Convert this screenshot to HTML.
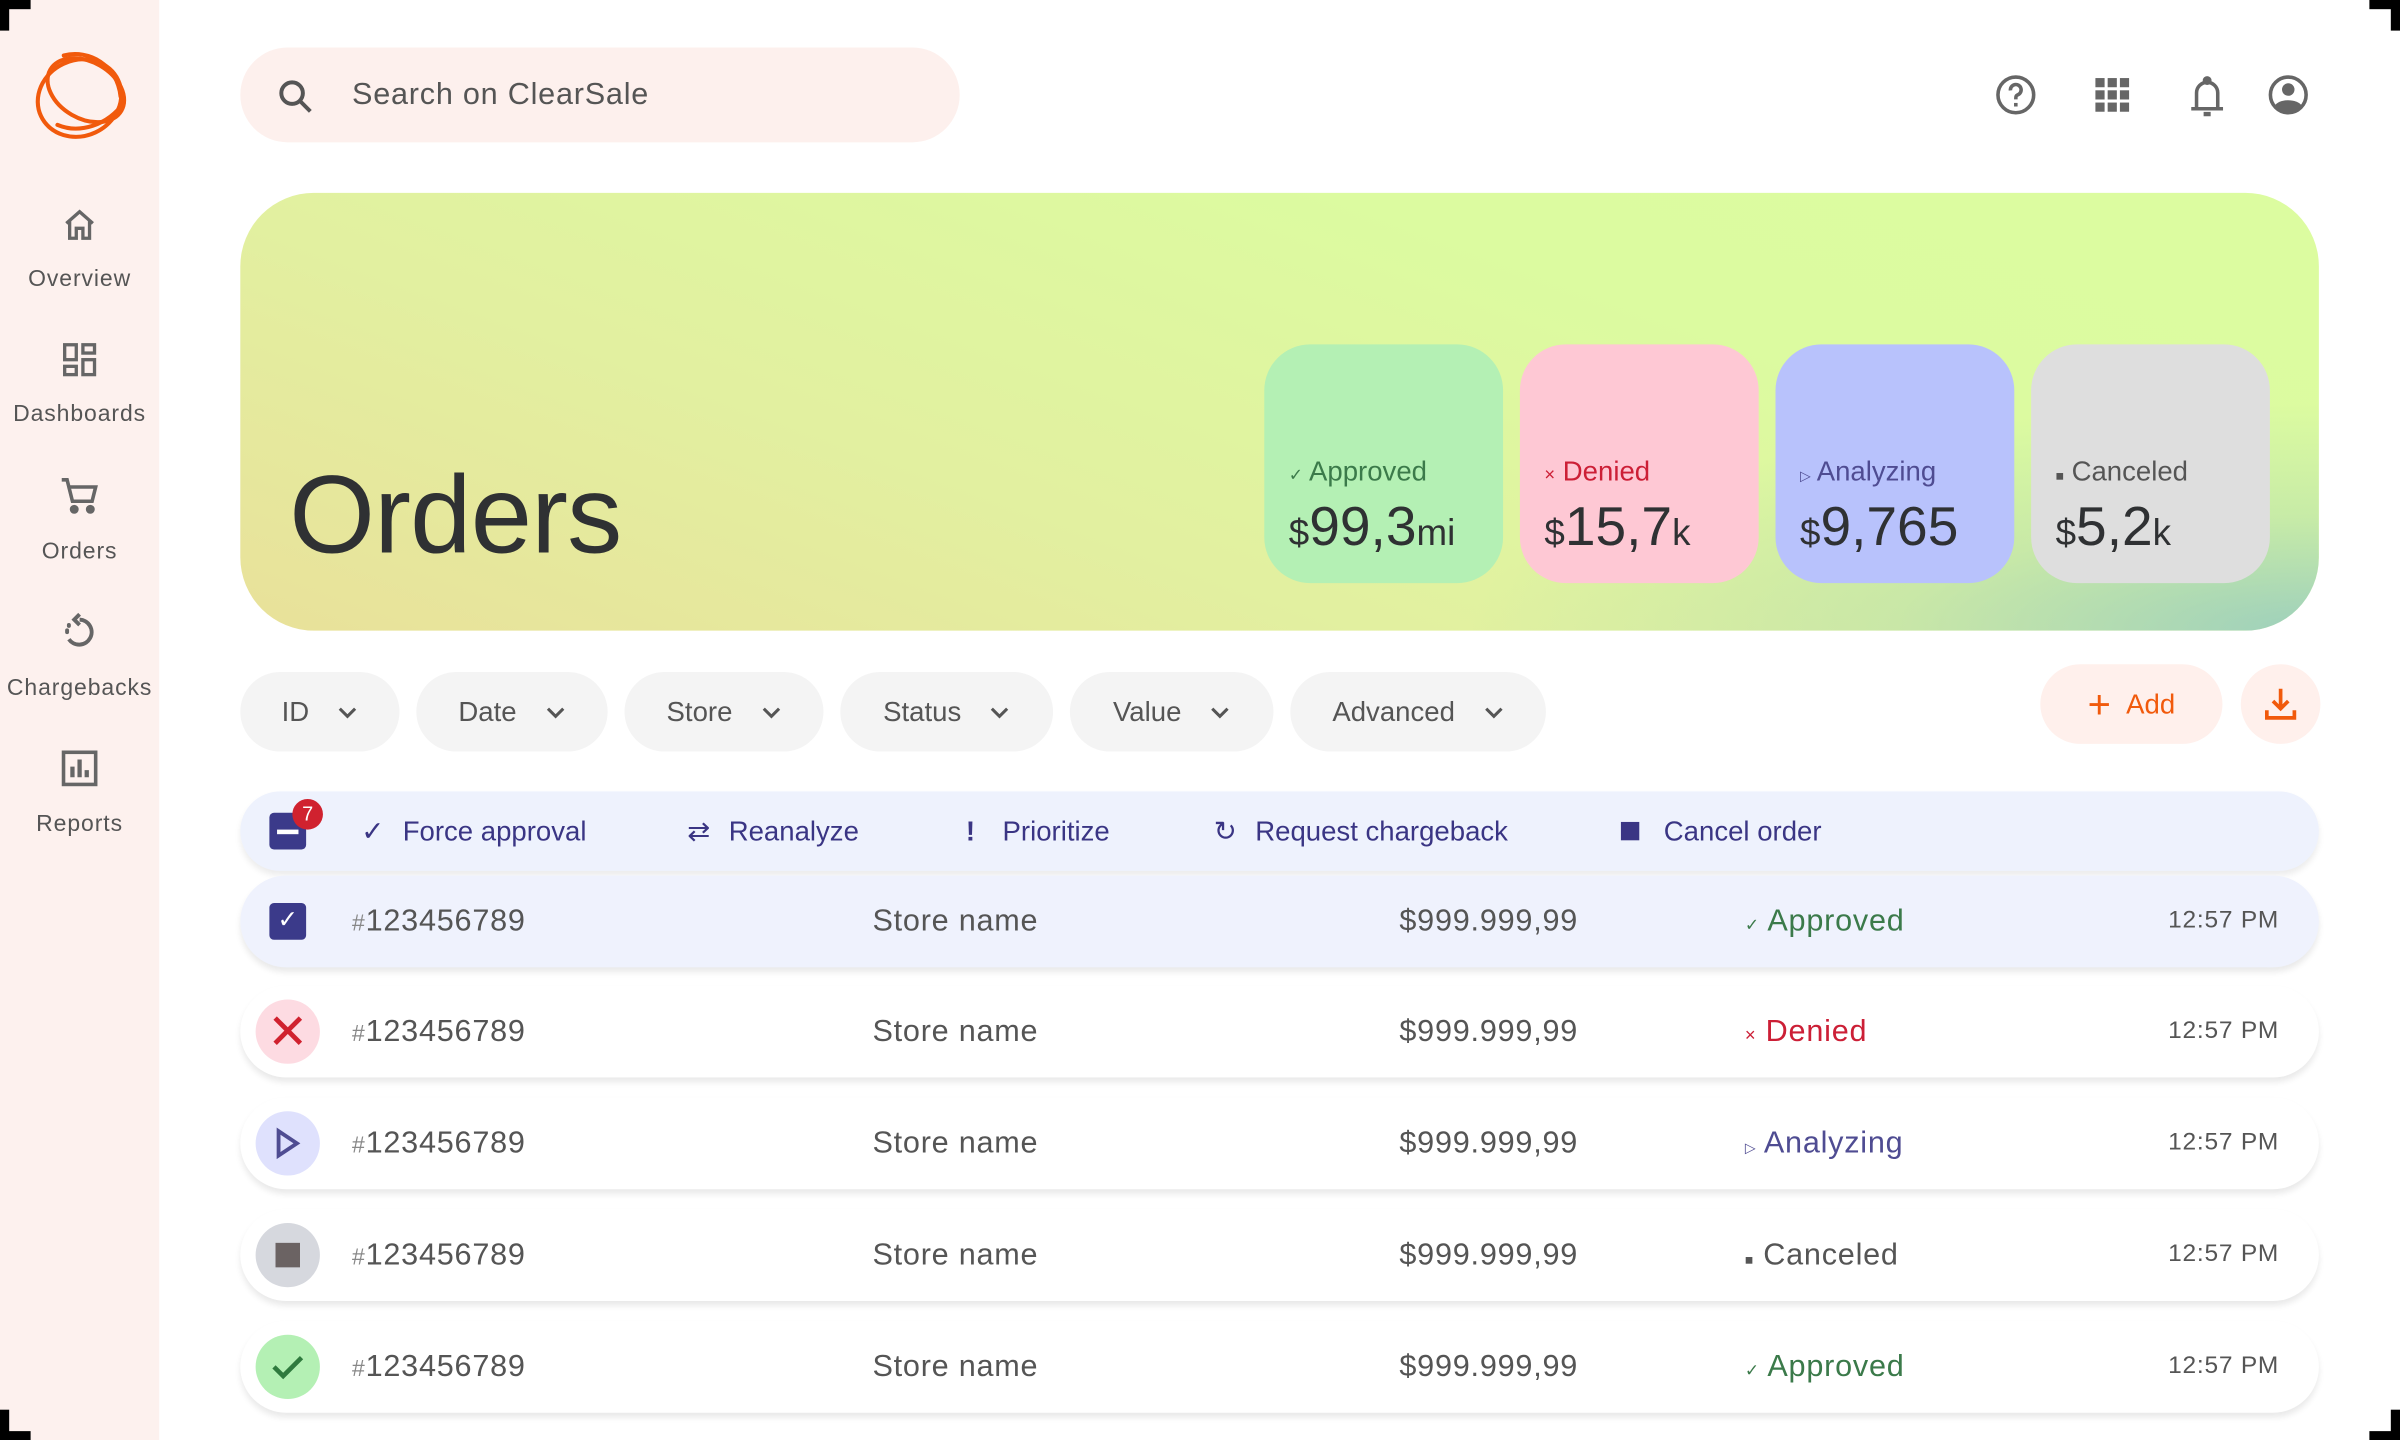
<!DOCTYPE html>
<html><head><meta charset="utf-8"><style>
html,body{margin:0;padding:0;width:2400px;height:1440px;overflow:hidden;background:#fff;}
#s{position:absolute;left:0;top:0;width:1568px;height:941px;transform:scale(1.530612);transform-origin:0 0;font-family:"Liberation Sans",sans-serif;color:#555;}
.a{position:absolute;}
.side{left:0;top:0;width:104px;height:941px;background:#fdf1ee;}
.nav{position:absolute;left:0;width:104px;text-align:center;font-size:15px;letter-spacing:.6px;color:#555;}
.nav svg{display:block;margin:0 auto 14px;}
.search{left:157px;top:31px;width:470px;height:62px;border-radius:31px;background:#fdf0ed;}
.banner{left:157px;top:126px;width:1358px;height:286px;border-radius:48px;overflow:hidden;background:linear-gradient(20deg,#e9e19a 0%,#e2f0a0 35%,#dcfba0 70%,#dcfca0 100%);}
.card{top:225px;width:156px;height:156px;border-radius:30px;}
.cl{position:absolute;left:16px;top:73px;font-size:18px;}
.cv{position:absolute;left:16px;top:98px;font-size:36px;color:#2f3133;}
.cv small{font-size:24px;}
.chip{top:439px;height:52px;border-radius:26px;background:#f4f4f4;font-size:18px;color:#555;display:flex;align-items:center;justify-content:center;gap:18px;}
.bar{left:157px;top:517px;width:1358px;height:52px;border-radius:26px;background:#eef2fd;box-shadow:0 3px 4px rgba(0,0,0,.08);}
.act{position:absolute;top:0;height:52px;line-height:52px;font-size:18px;color:#3a3584;}
.row{left:157px;width:1358px;height:60px;border-radius:30px;background:#fff;box-shadow:0 3px 4px rgba(0,0,0,.09);}
.row .t{position:absolute;top:0;line-height:60px;font-size:20px;color:#555;letter-spacing:.5px;}
.ic{position:absolute;left:10px;top:9px;width:42px;height:42px;border-radius:21px;}
.hash{font-size:15px;color:#888;}
</style></head><body><div id="s">
<div class="a side"></div>
<div class="a" style="left:0;top:0;width:20px;height:6px;background:#000"></div><div class="a" style="left:0;top:0;width:6px;height:20px;background:#000"></div>
<div class="a" style="right:0;top:0;width:20px;height:6px;background:#000"></div><div class="a" style="right:0;top:0;width:6px;height:20px;background:#000"></div>
<div class="a" style="left:0;bottom:0;width:20px;height:6px;background:#000"></div><div class="a" style="left:0;bottom:0;width:6px;height:20px;background:#000"></div>
<div class="a" style="right:0;bottom:0;width:20px;height:6px;background:#000"></div><div class="a" style="right:0;bottom:0;width:6px;height:20px;background:#000"></div>
<svg class="a" style="left:19px;top:28px" width="68" height="68" viewBox="0 0 66 66" fill="none" stroke="#f15a0c" stroke-width="2.6" stroke-linecap="round">
<ellipse cx="32" cy="35" rx="27" ry="24" transform="rotate(-25 32 35)"/>
<ellipse cx="36" cy="30" rx="26" ry="18" transform="rotate(30 36 30)"/>
<path d="M18 52 C32 58 50 52 60 38"/>
<path d="M22 8 C38 4 56 14 58 34"/>
</svg>
<div class="nav" style="top:134px"><svg width="26" height="26" viewBox="0 0 24 24" fill="none" stroke="#666" stroke-width="2"><path d="M4 11 L12 4 L20 11 M6 9.5 V20 H10 V14 H14 V20 H18 V9.5"/></svg>Overview</div>
<div class="nav" style="top:222px"><svg width="26" height="26" viewBox="0 0 24 24" fill="none" stroke="#666" stroke-width="2"><rect x="3" y="3" width="7" height="9"/><rect x="14" y="3" width="7" height="5"/><rect x="14" y="12" width="7" height="9"/><rect x="3" y="16" width="7" height="5"/></svg>Dashboards</div>
<div class="nav" style="top:310px"><svg width="28" height="28" viewBox="0 0 24 24" fill="none" stroke="#666" stroke-width="2"><path d="M2 3 H5 L8 15 H19 L21 7 H6"/><circle cx="9" cy="19.5" r="1.5" fill="#666"/><circle cx="18" cy="19.5" r="1.5" fill="#666"/></svg>Orders</div>
<div class="nav" style="top:399px"><svg width="28" height="28" viewBox="0 0 24 24" fill="none" stroke="#666" stroke-width="2.2"><path d="M12 5 A7 7 0 1 1 6 16" /><path d="M12 2 L9 5 L12 8" /><path d="M5 11 v1 M6 8 v0.5" stroke-linecap="round"/></svg>Chargebacks</div>
<div class="nav" style="top:488px"><svg width="28" height="28" viewBox="0 0 24 24" fill="none" stroke="#666" stroke-width="2"><rect x="3" y="3" width="18" height="18"/><path d="M8 17 V11 M12 17 V7 M16 17 V13" stroke-width="2.4"/></svg>Reports</div>
<div class="a search"></div>
<svg class="a" style="left:180px;top:50px" width="26" height="26" viewBox="0 0 24 24" fill="none" stroke="#555" stroke-width="2.4"><circle cx="10" cy="10" r="6.5"/><path d="M15 15 L21 21"/></svg>
<div class="a" style="left:230px;top:51px;font-size:20px;color:#555;letter-spacing:.5px">Search on ClearSale</div>
<svg class="a" style="left:1303px;top:48px" width="28" height="28" viewBox="0 0 24 24" fill="none" stroke="#666" stroke-width="2"><circle cx="12" cy="12" r="10"/><path d="M9 9.5 A3 3 0 1 1 13 12 C12 12.5 12 13 12 14.5"/><rect x="11" y="16.5" width="2" height="2" fill="#666" stroke="none"/></svg>
<svg class="a" style="left:1368px;top:50px" width="24" height="24" viewBox="0 0 24 24" fill="#666"><rect x="1" y="1" width="6" height="6"/><rect x="9" y="1" width="6" height="6"/><rect x="17" y="1" width="6" height="6"/><rect x="1" y="9" width="6" height="6"/><rect x="9" y="9" width="6" height="6"/><rect x="17" y="9" width="6" height="6"/><rect x="1" y="17" width="6" height="6"/><rect x="9" y="17" width="6" height="6"/><rect x="17" y="17" width="6" height="6"/></svg>
<svg class="a" style="left:1428px;top:48px" width="28" height="30" viewBox="0 0 24 26" fill="none" stroke="#666" stroke-width="2"><path d="M6 19 V11 A6 6 0 0 1 18 11 V19 M3 20 H21"/><circle cx="12" cy="4" r="1.5" fill="#666"/><path d="M10 23 H14" stroke-width="2.5"/></svg>
<svg class="a" style="left:1481px;top:48px" width="28" height="28" viewBox="0 0 24 24"><circle cx="12" cy="12" r="10" fill="none" stroke="#666" stroke-width="2"/><circle cx="12" cy="9" r="3.5" fill="#666"/><path d="M4.5 18 C7 14 17 14 19.5 18 A10 10 0 0 1 4.5 18 Z" fill="#666"/></svg>
<div class="a banner">
<div class="a" style="right:0;bottom:0;width:560px;height:150px;background:radial-gradient(ellipse at 100% 100%,rgba(130,190,200,.7) 0%,rgba(160,205,180,.35) 35%,rgba(220,250,160,0) 70%)"></div>
<div class="a" style="left:32px;top:170px;font-size:72px;color:#2f3133;letter-spacing:-0.5px">Orders</div>
</div>
<div class="a card" style="left:826px;background:#b4f0b4"><div class="cl" style="color:#3b7a4a"><span style="font-size:11px">✓</span> Approved</div><div class="cv"><small>$</small>99,3<small>mi</small></div></div>
<div class="a card" style="left:993px;background:#fec8d4"><div class="cl" style="color:#cc1f36"><span style="font-size:12px">×</span> Denied</div><div class="cv"><small>$</small>15,7<small>k</small></div></div>
<div class="a card" style="left:1160px;background:#b8c2fc"><div class="cl" style="color:#4f4c92"><span style="font-size:9px">▷</span> Analyzing</div><div class="cv"><small>$</small>9,765</div></div>
<div class="a card" style="left:1327px;background:#dedede"><div class="cl" style="color:#555"><span style="font-size:9px">■</span> Canceled</div><div class="cv"><small>$</small>5,2<small>k</small></div></div>
<div class="a chip" style="left:157px;width:104px">ID <svg width="14" height="10" viewBox="0 0 14 10"><path d="M2 3 L7 8 L12 3" fill="none" stroke="#555" stroke-width="2"/></svg></div>
<div class="a chip" style="left:272px;width:125px">Date <svg width="14" height="10" viewBox="0 0 14 10"><path d="M2 3 L7 8 L12 3" fill="none" stroke="#555" stroke-width="2"/></svg></div>
<div class="a chip" style="left:408px;width:130px">Store <svg width="14" height="10" viewBox="0 0 14 10"><path d="M2 3 L7 8 L12 3" fill="none" stroke="#555" stroke-width="2"/></svg></div>
<div class="a chip" style="left:549px;width:139px">Status <svg width="14" height="10" viewBox="0 0 14 10"><path d="M2 3 L7 8 L12 3" fill="none" stroke="#555" stroke-width="2"/></svg></div>
<div class="a chip" style="left:699px;width:133px">Value <svg width="14" height="10" viewBox="0 0 14 10"><path d="M2 3 L7 8 L12 3" fill="none" stroke="#555" stroke-width="2"/></svg></div>
<div class="a chip" style="left:843px;width:167px">Advanced <svg width="14" height="10" viewBox="0 0 14 10"><path d="M2 3 L7 8 L12 3" fill="none" stroke="#555" stroke-width="2"/></svg></div>
<div class="a" style="left:1333px;top:434px;width:119px;height:52px;border-radius:26px;background:#fff0ec;color:#f15a0c;font-size:18px;line-height:52px;text-align:center"><span style="font-size:26px;vertical-align:-3px;margin-right:10px">+</span>Add</div>
<div class="a" style="left:1464px;top:434px;width:52px;height:52px;border-radius:26px;background:#fff0ec"></div>
<svg class="a" style="left:1478px;top:448px" width="24" height="24" viewBox="0 0 24 24" fill="none" stroke="#f15a0c" stroke-width="2.4"><path d="M12 2 V15 M7 10 L12 15 L17 10 M3 16 V21 H21 V16"/></svg>
<div class="a bar">
<div class="a" style="left:19px;top:14px;width:24px;height:24px;border-radius:3px;background:#3b3a8a"></div>
<div class="a" style="left:24px;top:25px;width:14px;height:3px;background:#fff"></div>
<div class="a" style="left:34px;top:5px;width:20px;height:20px;border-radius:10px;background:#d0222f;color:#fff;font-size:13px;text-align:center;line-height:20px">7</div>
<div class="act" style="left:79px"><span style="margin-right:12px">✓</span>Force approval</div>
<div class="act" style="left:292px"><span style="margin-right:12px">⇄</span>Reanalyze</div>
<div class="act" style="left:474px"><b style="margin-right:18px">!</b>Prioritize</div>
<div class="act" style="left:636px"><span style="margin-right:12px">↻</span>Request chargeback</div>
<div class="act" style="left:902px"><span style="display:inline-block;width:12px;height:12px;background:#3a3584;margin-right:16px"></span>Cancel order</div>
</div>
<div class="a row" style="top:572px;height:60px;background:#eff2fd">
<div class="a" style="left:19px;top:18px;width:24px;height:24px;border-radius:3px;background:#3b3a8a;color:#fff;text-align:center;line-height:24px;font-size:16px">✓</div>
<div class="t" style="left:73px"><span class="hash">#</span>123456789</div><div class="t" style="left:413px">Store name</div><div class="t" style="right:484px">$999.999,99</div>
<div class="t" style="left:983px;color:#3b7a4a"><span style="font-size:11px">✓</span> Approved</div><div class="t" style="right:26px;font-size:16px">12:57 PM</div></div>
<div class="a row" style="top:644px">
<div class="ic" style="background:#fddbe2;color:#d0222f;font-size:32px;text-align:center;line-height:42px">✕</div>
<div class="t" style="left:73px"><span class="hash">#</span>123456789</div><div class="t" style="left:413px">Store name</div><div class="t" style="right:484px">$999.999,99</div>
<div class="t" style="left:983px;color:#cc1f36"><span style="font-size:12px">×</span> Denied</div><div class="t" style="right:26px;font-size:16px">12:57 PM</div></div>
<div class="a row" style="top:717px">
<div class="ic" style="background:#dfe1fd"><svg width="42" height="42" viewBox="0 0 42 42"><path d="M15 13 L27 21 L15 29 Z" fill="none" stroke="#4f4c92" stroke-width="2.5"/></svg></div>
<div class="t" style="left:73px"><span class="hash">#</span>123456789</div><div class="t" style="left:413px">Store name</div><div class="t" style="right:484px">$999.999,99</div>
<div class="t" style="left:983px;color:#4f4c92"><span style="font-size:9px">▷</span> Analyzing</div><div class="t" style="right:26px;font-size:16px">12:57 PM</div></div>
<div class="a row" style="top:790px">
<div class="ic" style="background:#d6d8de"><div class="a" style="left:13px;top:13px;width:16px;height:16px;background:#6b6363"></div></div>
<div class="t" style="left:73px"><span class="hash">#</span>123456789</div><div class="t" style="left:413px">Store name</div><div class="t" style="right:484px">$999.999,99</div>
<div class="t" style="left:983px;color:#555"><span style="font-size:9px">■</span> Canceled</div><div class="t" style="right:26px;font-size:16px">12:57 PM</div></div>
<div class="a row" style="top:863px">
<div class="ic" style="background:#b4f0b4"><svg width="42" height="42" viewBox="0 0 42 42"><path d="M12 21 L18 27 L30 15" fill="none" stroke="#2f7a3e" stroke-width="3"/></svg></div>
<div class="t" style="left:73px"><span class="hash">#</span>123456789</div><div class="t" style="left:413px">Store name</div><div class="t" style="right:484px">$999.999,99</div>
<div class="t" style="left:983px;color:#3b7a4a"><span style="font-size:11px">✓</span> Approved</div><div class="t" style="right:26px;font-size:16px">12:57 PM</div></div>
</div></body></html>
